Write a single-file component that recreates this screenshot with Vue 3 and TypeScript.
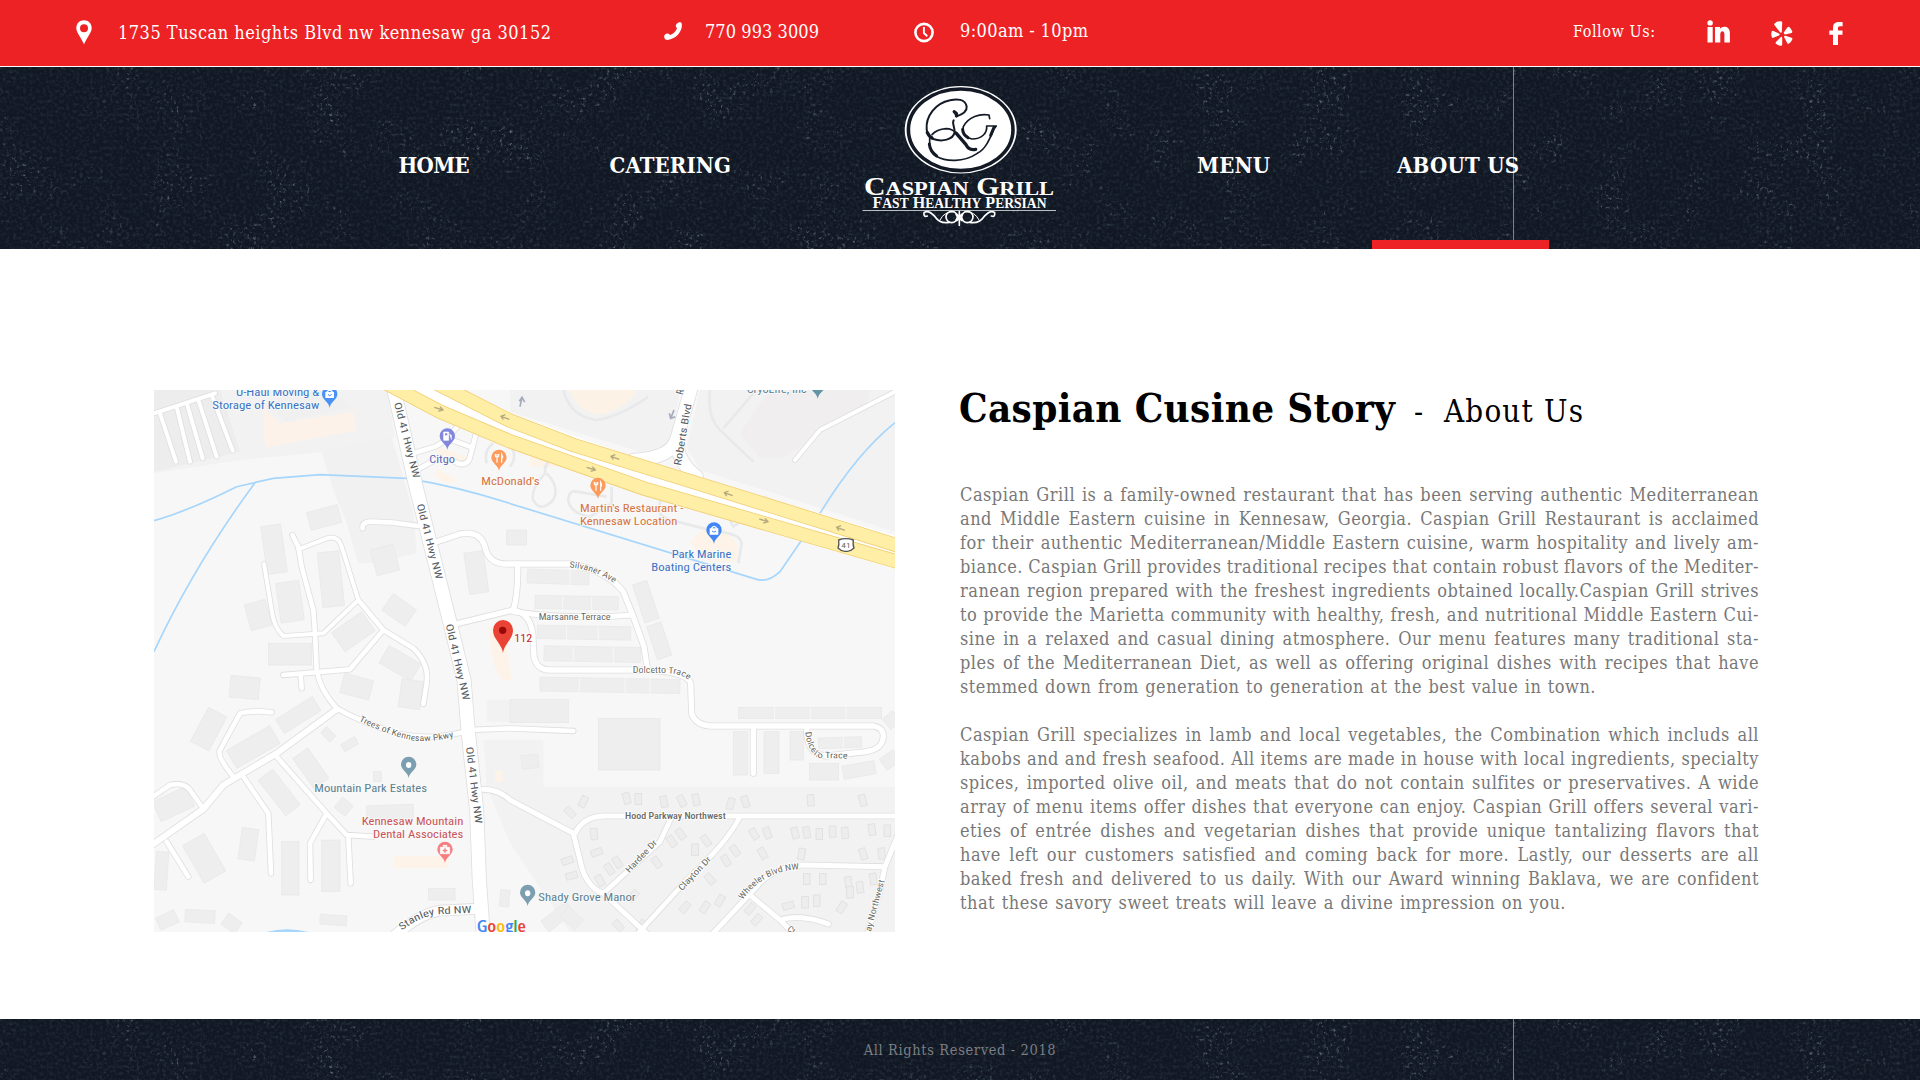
<script setup lang="ts">
type Fit = { width: number; mode?: 'letter' | 'word' }

// Spreads a line over an exact width, through its letters or its word gaps.
const vFit = {
  mounted(el: HTMLElement, binding: { value: Fit }) {
    const { width, mode = 'letter' } = binding.value
    const text = (el.textContent ?? '').trim()
    const base = parseFloat(getComputedStyle(el).letterSpacing) || 0
    const range = document.createRange()
    range.selectNodeContents(el)
    const natural = range.getBoundingClientRect().width
    if (mode === 'word') {
      const gaps = text.split(' ').length - 1
      el.style.wordSpacing = `${(width - natural) / gaps}px`
    } else {
      el.style.letterSpacing = `${base + (width - natural) / (text.length - 1)}px`
    }
  },
}

const story: { text: string; width: number }[][] = [
  [
    { text: 'Caspian Grill is a family-owned restaurant that has been serving authentic Mediterranean', width: 799 },
    { text: 'and Middle Eastern cuisine in Kennesaw, Georgia. Caspian Grill Restaurant is acclaimed', width: 799 },
    { text: 'for their authentic Mediterranean/Middle Eastern cuisine, warm hospitality and lively am-', width: 799 },
    { text: 'biance. Caspian Grill provides traditional recipes that contain robust flavors of the Mediter-', width: 799 },
    { text: 'ranean region prepared with the freshest ingredients obtained locally.Caspian Grill strives', width: 799 },
    { text: 'to provide the Marietta community with healthy, fresh, and nutritional Middle Eastern Cui-', width: 799 },
    { text: 'sine in a relaxed and casual dining atmosphere. Our menu features many traditional sta-', width: 799 },
    { text: 'ples of the Mediterranean Diet, as well as offering original dishes with recipes that have', width: 799 },
    { text: 'stemmed down from generation to generation at the best value in town.', width: 636 },
  ],
  [
    { text: 'Caspian Grill specializes in lamb and local vegetables, the Combination which includs all', width: 799 },
    { text: 'kabobs and and fresh seafood. All items are made in house with local ingredients, specialty', width: 799 },
    { text: 'spices, imported olive oil, and meats that do not contain sulfites or preservatives. A wide', width: 799 },
    { text: 'array of menu items offer dishes that everyone can enjoy. Caspian Grill offers several vari-', width: 799 },
    { text: 'eties of entrée dishes and vegetarian dishes that provide unique tantalizing flavors that', width: 799 },
    { text: 'have left our customers satisfied and coming back for more. Lastly, our desserts are all', width: 799 },
    { text: 'baked fresh and delivered to us daily. With our Award winning Baklava, we are confident', width: 799 },
    { text: 'that these savory sweet treats will leave a divine impression on you.', width: 606 },
  ],
]

const roads: { d: string; w: number }[] = [
  { d: 'M42 100L225 40M60 100L108 245M110 80L150 245M140 68L188 235M175 60L230 230M215 45L278 212', w: 12 },
  { d: 'M668 445Q665 425 695 425L760 428L835 438', w: 14 },
  { d: 'M457 465L475 500L485 560L520 690L525 760L530 870Q540 930 590 985Q650 1020 740 1050Q850 1090 985 1052', w: 14 },
  { d: 'M475 508L560 475Q595 465 605 500L655 660L550 760L430 768Q400 740 395 690L372 552', w: 12 },
  { d: 'M655 660L730 750L820 805Q868 850 860 910L850 972M730 750L630 868L430 885M482 885L485 925', w: 14 },
  { d: 'M820 220L885 200L920 180L955 135M830 270L885 240M935 180L990 200M1010 155L988 238Q975 262 945 246', w: 14 },
  { d: 'M885 487L960 462Q1020 450 1035 500Q1045 552 1100 552L1290 552Q1400 570 1450 635L1480 710L1512 800L1522 865', w: 16 },
  { d: 'M1133 552Q1135 640 1120 690L935 735M1120 690Q1170 700 1178 760L1182 830Q1190 870 1230 870L1480 870', w: 16 },
  { d: 'M1480 870Q1640 870 1652 910L1655 1000Q1665 1035 1710 1038L2200 1038Q2238 1045 2228 1080Q2220 1115 2150 1118L2060 1128Q2000 1125 2000 1045M1840 1038V1180', w: 16 },
  { d: 'M1120 695Q1300 720 1475 705', w: 15 },
  { d: 'M985 1050L1110 1045L1300 1053', w: 14 },
  { d: 'M1030 1228Q1080 1230 1110 1260L1300 1360L1320 1440Q1335 1520 1390 1540L1530 1670M1305 1360Q1330 1310 1390 1308L2280 1308', w: 15 },
  { d: 'M1595 1310L1560 1385L1390 1540M1800 1310Q1760 1390 1640 1500L1490 1665', w: 14 },
  { d: 'M1710 1670L1850 1520Q1900 1460 1990 1455L2235 1460M2280 1350L2235 1460L2220 1530Q2200 1600 2180 1670M1830 1545L1920 1620L1980 1680M1920 1620Q1980 1600 2065 1632', w: 15 },
  { d: 'M32 1398L190 1287L250 1215L410 1120L590 988', w: 18 },
  { d: 'M32 1255L90 1215Q130 1205 150 1230L190 1287M80 1385L145 1490M280 1190Q230 1130 240 1110L300 1000Q340 990 395 997', w: 14 },
  { d: 'M310 1190L385 1300L393 1480M410 1130L560 1300L620 1365L700 1370M560 1300L510 1390L512 1500M625 1370L632 1510', w: 14 },
  { d: 'M760 1670Q840 1600 900 1592L1015 1586', w: 30 },
  { d: 'M1655 20L1612 170Q1600 235 1480 240M1612 170Q1605 240 1670 290', w: 38 },
  { d: 'M2275 30L2040 150L1965 240', w: 12 },
  { d: 'M760 20L828 320L928 720L972 900L985 1060L1010 1290L1018 1500L1030 1670', w: 40 },
]

// x, y, width, height, rotation
const blocks: number[][] = [
  [372, 435, 60, 145, -8], [505, 385, 95, 55, -15], [415, 605, 70, 120, -8], [322, 665, 65, 80, -15],
  [540, 515, 65, 165, -6], [735, 660, 85, 60, 35], [585, 720, 110, 70, -35], [700, 500, 70, 80, -15],
  [980, 515, 58, 125, -8], [385, 790, 130, 65, 0], [270, 890, 88, 65, 5], [175, 990, 62, 115, 28],
  [265, 1070, 150, 62, -30], [410, 980, 130, 50, -32], [605, 890, 90, 60, 15], [725, 820, 110, 60, 30],
  [780, 900, 65, 85, 8], [45, 1240, 110, 65, -25], [155, 1370, 75, 130, -30], [300, 1345, 50, 95, 8],
  [425, 1385, 52, 160, 0], [545, 1380, 55, 155, 0], [390, 1170, 55, 135, -38], [485, 1110, 55, 110, -35],
  [45, 1415, 38, 115, 4], [680, 1275, 140, 42, -2], [865, 1525, 80, 35, 0], [540, 1605, 80, 30, 4],
  [135, 1590, 90, 38, 3], [52, 1600, 60, 40, -25], [250, 1610, 50, 40, 35], [605, 1080, 48, 25, -30],
  [1162, 570, 185, 42, 2], [1185, 648, 250, 40, 1], [1192, 738, 280, 40, 1], [1212, 800, 290, 45, 1],
  [1495, 605, 45, 120, -18], [1535, 730, 45, 105, -18], [1200, 895, 420, 42, 1], [1375, 1015, 185, 155, 0],
  [1795, 982, 430, 34, 0], [1780, 1055, 42, 130, 0], [1872, 1055, 45, 125, 0], [1950, 1055, 40, 85, 0],
  [2035, 1072, 130, 32, -2], [2008, 1150, 88, 50, 0], [2108, 1150, 98, 40, -10], [1110, 958, 175, 70, 0],
  [1145, 1125, 50, 40, -5], [1100, 450, 60, 45, 0], [590, 1260, 42, 40, 40], [700, 1175, 24, 30, 0],
  [2235, 1000, 40, 40, -40], [2225, 1120, 50, 40, -35], [1205, 1590, 95, 40, -38], [1265, 1595, 60, 40, 40],
  [1080, 1530, 28, 50, 5], [545, 1050, 40, 26, 45],
]

const houses: number[][] = [
  [1320, 1248, 26], [1450, 1238, -15], [1485, 1240, 0], [1562, 1248, -12], [1615, 1246, -25], [1658, 1242, -10],
  [1762, 1254, 15], [1806, 1248, -18], [2002, 1244, -4], [2158, 1244, -15], [1280, 1280, -45], [1352, 1345, -5],
  [1360, 1400, 70], [1272, 1425, 70], [1285, 1470, 75], [1370, 1485, -30], [1398, 1450, -32], [1422, 1430, -32],
  [1540, 1430, -35], [1585, 1367, -35], [1612, 1345, -35], [1655, 1392, 0], [1688, 1365, -35], [1748, 1425, -30],
  [1775, 1395, -35], [1832, 1345, -32], [1872, 1342, -20], [1955, 1342, -15], [1990, 1340, -10], [2028, 1345, 0],
  [2068, 1338, -2], [2105, 1342, -5], [2186, 1332, -8], [2232, 1335, 0], [1858, 1403, -30], [1975, 1405, 10],
  [2160, 1405, -20], [2215, 1404, -5], [1700, 1480, -40], [1625, 1565, 40], [1685, 1565, 35], [1730, 1545, 30],
  [1990, 1480, 0], [2038, 1480, 0], [2115, 1490, -8], [2190, 1480, -8], [1935, 1560, 75], [1985, 1550, 0],
  [2020, 1545, 0], [2095, 1565, 30], [1820, 1570, 40], [1840, 1602, 40], [1425, 1620, -40], [1470, 1530, 40],
  [2120, 1520, 0], [2150, 1505, -8], [1495, 1620, 30],
]
</script>

<template>
  <div class="page">
    <svg class="defs" width="0" height="0" aria-hidden="true">
      <filter id="grain" x="0" y="0" width="100%" height="100%" color-interpolation-filters="sRGB">
        <feTurbulence type="fractalNoise" baseFrequency="0.3" numOctaves="3" seed="4" result="fine" />
        <feColorMatrix in="fine" values="0 0 0 0 .5  0 0 0 0 .56  0 0 0 0 .58  2.6 0 0 0 -1.55" result="specks" />
        <feTurbulence type="fractalNoise" baseFrequency="0.02" numOctaves="3" seed="9" result="cloud" />
        <feColorMatrix in="cloud" values="0 0 0 0 1  0 0 0 0 1  0 0 0 0 1  0 3 0 0 -1.25" result="mask" />
        <feComposite in="specks" in2="mask" operator="in" result="dust" />
        <feColorMatrix in="fine" values="0 0 0 0 .25  0 0 0 0 .33  0 0 0 0 .38  0 0 .7 0 -.3" result="haze" />
        <feMerge><feMergeNode in="haze" /><feMergeNode in="dust" /></feMerge>
      </filter>
    </svg>

    <div class="topbar">
      <div class="item address">
        <svg class="pin" width="16" height="25" viewBox="0 0 16 25">
          <path fill="#fff" fill-rule="evenodd" d="M8 .2C3.500.2.300 3.500.300 8c0 4.500 4 8 7.700 16.300C11.700 16 15.700 12.500 15.700 8 15.700 3.500 12.500.200 8 .200ZM8 4.200a4 4 0 1 1 0 8 4 4 0 0 1 0-8Z" />
        </svg>
        <span v-fit="{ width: 433 }" class="t18">1735 Tuscan heights Blvd nw kennesaw ga 30152</span>
      </div>
      <div class="item phone">
        <svg width="18" height="18" viewBox="0 0 18 18">
          <path d="M13.200 1.200Q14.800-.2 16.800.3Q18 .8 17.900 3.600C17.700 11 10.500 17.800 3 17.900Q1.200 17.900.5 16.300Q-.2 14 .8 12.800Q2.700 11 4.200 11.600L6.200 13C9 12.200 12 9.500 13 6.300L11.800 4.300Q11.600 2.700 13.200 1.200Z" fill="#fff" />
        </svg>
        <span v-fit="{ width: 114 }" class="t18">770 993 3009</span>
      </div>
      <div class="item hours">
        <svg width="20" height="21" viewBox="0 0 20 21">
          <circle cx="10" cy="10.500" r="8.600" fill="none" stroke="#fff" stroke-width="2.600" />
          <path d="M9.900 5V11L13.300 14.200" fill="none" stroke="#fff" stroke-width="1.900" />
        </svg>
        <span v-fit="{ width: 128 }" class="t18">9:00am - 10pm</span>
      </div>
      <div class="item follow">
        <span v-fit="{ width: 82 }" class="t16">Follow Us:</span>
        <svg class="in" width="23" height="23" viewBox="0 0 23 23">
          <g fill="#fff">
            <circle cx="3.100" cy="2.900" r="2.700" />
            <path d="M.5 6.900H5.700V22.500H.500ZM8 6.900H13V8.600C15.500 5.500 22.900 5.500 22.900 13V22.500H17.400V14.200C17.400 10.300 13.300 10.300 13.300 14.200V22.500H8Z" />
          </g>
        </svg>
        <svg class="yelp" width="22" height="25" viewBox="0 0 22 25">
          <path fill="#fff" d="M3.500 2.500Q6-.3 10.200.3Q11.300.5 11.200 1.800L10.800 10.800Q10.500 12.500 9 11.300L3.400 4Q3 3.200 3.500 2.500ZM.8 10.300Q1.300 9.400 2.500 9.900L8 12.500Q9.300 13.400 8 14.400L2.300 16.800Q1.200 17.100.9 16.200Q-.3 13 .8 10.300ZM9.600 16.300Q10.900 15.200 11.200 16.800V23.600Q11 25 9.800 24.800Q7 24.500 5 22.800Q4.300 22 4.900 21.100ZM13.200 16.200Q12.600 14.600 14.300 14.800L20.600 16.700Q21.800 17.200 21.300 18.400Q20 21.300 18 22.500Q17 23.100 16.300 22.200ZM12.800 11.400L16.500 6.200Q17.400 5.300 18.500 6.200Q20.700 8.300 21.300 10.400Q21.500 11.500 20.500 11.900L14.300 13.400Q12.500 13.300 12.800 11.400Z" />
        </svg>
        <svg class="fb" width="14" height="23" viewBox="0 0 14 23">
          <path fill="#fff" d="M4 23V12.700H.300V8.500H4V5.600C4 1.500 6.500 0 10 0H13.600V4.300H11C9.500 4.300 9 5 9 6.200V8.500H13.500V12.700H9V23Z" />
        </svg>
      </div>
    </div>

    <header class="nav dark">
      <svg class="grain" width="1920" height="182"><rect width="100%" height="100%" filter="url(#grain)" /></svg>
      <i class="seam"></i>
      <nav class="left">
        <a class="home"><span v-fit="{ width: 71 }">HOME</span></a>
        <a class="catering"><span v-fit="{ width: 121.500 }">CATERING</span></a>
      </nav>
      <svg class="logo" width="200" height="150" viewBox="860 80 200 150">
        <ellipse cx="960.700" cy="129.800" rx="56" ry="43.700" fill="#fff" />
        <ellipse cx="960.700" cy="129.800" rx="52.300" ry="40.800" fill="none" stroke="#131a26" stroke-width="3.600" />
        <g transform="translate(840 70) scale(.33333)" fill="none" stroke="#131a26" stroke-linecap="round" stroke-linejoin="round">
          <path stroke-width="6" d="M342 123Q356 130 350 139Q382 128 380 110C376 86 350 86 330 91C285 100 257 140 260 178Q262 198 280 207C305 216 340 210 344 186C344 170 335 158 341 151" />
          <path stroke-width="10" d="M262 188Q266 198 276 204M349 190L378 224Q386 242 407 238" />
          <path stroke-width="5" d="M340 125L350 138M276 194Q290 178 318 176Q338 176 352 192" />
          <path stroke-width="5" d="M449 146L447 135C420 130 385 140 370 170C365 188 376 203 396 207C425 207 442 190 440 168H469L461 178C448 210 436 238 412 250C370 278 318 276 288 258Q266 244 269 204" />
          <path stroke-width="9" d="M350 132L349 138M462 172L452 196M268 222Q270 244 290 258M368 178Q368 194 384 203" />
        </g>
        <g fill="#fff" font-family="'Liberation Serif', serif">
          <text x="864" y="194.800" font-size="26" textLength="190" lengthAdjust="spacingAndGlyphs">C<tspan font-size="19.500">ASPIAN</tspan> G<tspan font-size="19.500">RILL</tspan></text>
          <text x="872.500" y="207.600" font-size="16.500" textLength="174" lengthAdjust="spacingAndGlyphs">F<tspan font-size="14">AST</tspan> H<tspan font-size="14">EALTHY</tspan> P<tspan font-size="14">ERSIAN</tspan></text>
        </g>
        <path d="M862.500 210.500H1056" stroke="#b9bdc1" stroke-width="1" />
        <g transform="translate(840 70) scale(.33333)" fill="none" stroke="#fff" stroke-width="5" stroke-linecap="round">
          <circle cx="335" cy="441" r="17" />
          <circle cx="382" cy="441" r="17" />
          <path d="M342 425Q312 424 300 450M375 425Q405 424 417 450" stroke-width="3" />
          <path d="M328 457Q300 462 285 440Q265 418 252 428Q250 442 262 438M389 457Q417 462 432 440Q452 418 464 428Q466 442 454 438M358 425V466" />
          <path d="M350 434L366 450M366 434L350 450" stroke-width="8" />
        </g>
      </svg>
      <nav class="right">
        <a class="menu"><span v-fit="{ width: 73 }">MENU</span></a>
        <a class="about active"><span v-fit="{ width: 122 }">ABOUT US</span></a>
      </nav>
    </header>

    <main class="content">
      <svg class="map" width="741" height="542" viewBox="42 30 2223 1626" preserveAspectRatio="none">
        <rect x="42" y="30" width="2223" height="1626" fill="#f7f7f7" />
        <g fill="#f2f2f2">
          <path d="M42 30H740L765 170L560 215L300 240L42 280Z" />
          <path d="M1250 30H1620L1590 200L1500 215L1110 95V30Z" />
          <path d="M1680 30H2265V455L1680 270L1640 200Z" />
          <path d="M1040 960H1285V1025H1040ZM1030 1080H1210V1220H2265V1656H1290L1110 1390L1040 1220Z" />
        </g>
        <path d="M545 215L755 170L820 400L830 520L700 550H655L620 430L580 330Z" fill="#f2f1f2" />
        <path d="M42 30H240L300 215L42 275Z" fill="#eeedee" />
        <path d="M370 85L420 130L640 95L650 150L375 203Z" fill="#fdf2e9" />
        <path d="M430 30H560L640 80L440 125L405 90Z" fill="#f0f0f1" />
        <path d="M1290 30H1490Q1460 90 1370 105Q1300 80 1290 30Z" fill="#fdf2e6" />
        <path d="M1890 30H2190L2180 70L1930 235H1860L1800 160Z" fill="#f0eeee" />
        <path d="M890 200L980 230L970 255L900 240ZM890 265L950 300L930 312L885 290ZM1170 230H1250V260H1170ZM1650 490Q1680 440 1740 440Q1810 480 1790 545H1710ZM760 1428H925V1465H760ZM1045 740H1090L1115 900H1085L1060 850ZM1065 1172H1088V1205H1065Z" fill="#fdf3e8" />
        <g fill="none" stroke="#e8e9ea" stroke-width="8">
          <path d="M1270 30Q1290 110 1370 120Q1440 110 1525 50M1710 30Q1700 110 1740 150L1840 245M1840 40L1750 145M1215 270L1225 240M1040 250Q1030 210 1060 190M1100 190Q1140 220 1110 260M1220 280Q1260 320 1240 360Q1200 400 1180 360Q1170 330 1215 280V255" />
          <path d="M1415 320V370L1350 410Q1290 400 1285 360Q1285 330 1310 335L1400 350M1560 350V370Q1540 410 1610 425L1730 455Q1800 460 1805 490L1795 550M1765 410L1780 440L1810 420" />
        </g>
        <g fill="#eeeeef" stroke="#e7e7e8" stroke-width="2">
          <rect v-for="(b, i) in blocks" :key="i" :x="b[0]" :y="b[1]" :width="b[2]" :height="b[3]" :transform="`rotate(${b[4]} ${b[0] + b[2] / 2} ${b[1] + b[3] / 2})`" />
        </g>
        <g fill="#ededed" stroke="#dcdcdc" stroke-width="2">
          <rect v-for="(h, i) in houses" :key="i" :x="h[0]" :y="h[1]" width="20" height="34" :transform="`rotate(${h[2]} ${h[0] + 10} ${h[1] + 17})`" />
        </g>
        <g fill="none" stroke="#f7f7f7" stroke-width="3">
          <path d="M1290 570V620M1268 650V690M1355 650V690M1280 740V780M1375 740V780M1300 800V850M1420 800V850M1318 895V940M1455 895V940M1530 895V940M1904 980V1018M2011 980V1018M2118 980V1018M2110 1070V1105" />
        </g>
        <g fill="none" stroke="#a6d6fc" stroke-width="5">
          <path d="M42 422Q140 395 290 320L400 295L540 284L800 295Q960 320 1140 380L1850 598Q1885 608 1920 575L2040 400Q2150 220 2265 128" />
          <path d="M345 308Q160 560 42 815" />
          <path d="M375 1660Q440 1640 510 1660Z" fill="#a6d6fc" />
        </g>
        <g fill="none" stroke="#dfdfdf" stroke-linecap="round" stroke-linejoin="round">
          <path v-for="(r, i) in roads" :key="i" :d="r.d" :stroke-width="r.w + 5" />
        </g>
        <g fill="none" stroke="#fff" stroke-linecap="round" stroke-linejoin="round">
          <path v-for="(r, i) in roads" :key="i" :d="r.d" :stroke-width="r.w" />
        </g>
        <g fill="none">
          <path d="M780 -10L1110 150L1510 291L2275 520" stroke="#fff" stroke-width="96" />
          <g stroke="#f2cf74" stroke-width="43">
            <path d="M830 -20L1110 122L1300 195L1640 300L2275 497" />
            <path d="M720 0L900 95L1110 184L1510 325L2275 546" />
          </g>
          <g stroke="#feeea6" stroke-width="38">
            <path d="M830 -20L1110 122L1300 195L1640 300L2275 497" />
            <path d="M720 0L900 95L1110 184L1510 325L2275 546" />
          </g>
          <g stroke="#b5a97e" stroke-width="4">
            <path id="arrow-l" d="M1438 238L1413 229M1426 224L1413 229L1420 239" />
            <use href="#arrow-l" x="340" y="109" />
            <use href="#arrow-l" x="677" y="213" />
            <use href="#arrow-l" x="-330" y="-120" />
            <path id="arrow-r" d="M1340 262L1366 270M1352 274L1366 270L1357 260" />
            <use href="#arrow-r" x="518" y="155" />
            <use href="#arrow-r" x="-457" y="-180" />
          </g>
          <path d="M1602 90L1592 115M1588 100L1592 115L1606 110M1140 80L1146 52M1138 64L1146 52L1154 66" stroke="#a5acbd" stroke-width="5" />
        </g>
        <path d="M2096 480Q2118 472 2140 480Q2138 496 2142 504Q2130 516 2118 514Q2106 516 2094 504Q2098 494 2096 480Z" fill="#fff" stroke="#555" stroke-width="4" />

        <defs>
          <path id="trees" d="M656 1022Q740 1065 820 1082Q880 1088 952 1068" />
          <path id="silvaner" d="M1288 562Q1370 570 1432 616" />
          <path id="dolcetto" d="M1478 880L1590 880Q1630 882 1656 910" />
          <path id="dolcetto2" d="M1996 1056Q2000 1110 2035 1134L2140 1136" />
          <path id="stanley" d="M785 1652Q850 1602 910 1602L1000 1598" />
          <path id="wheeler" d="M1808 1560Q1870 1470 1985 1468" />
        </defs>
        <g class="street" font-size="30">
          <text transform="translate(762 70) rotate(75.500)" textLength="234" lengthAdjust="spacingAndGlyphs">Old 41 Hwy NW</text>
          <text transform="translate(830 374) rotate(75.500)" textLength="233" lengthAdjust="spacingAndGlyphs">Old 41 Hwy NW</text>
          <text transform="translate(917 734) rotate(77)" textLength="234" lengthAdjust="spacingAndGlyphs">Old 41 Hwy NW</text>
          <text transform="translate(978 1102) rotate(83)" textLength="231" lengthAdjust="spacingAndGlyphs">Old 41 Hwy NW</text>
          <text transform="translate(1622 258) rotate(-80)" textLength="188" lengthAdjust="spacingAndGlyphs">Roberts Blvd</text>
          <text transform="translate(1628 46) rotate(-76)">R</text>
          <text><textPath href="#stanley" textLength="222" lengthAdjust="spacingAndGlyphs">Stanley Rd NW</textPath></text>
        </g>
        <g class="street small" font-size="26">
          <text><textPath href="#trees" textLength="298" lengthAdjust="spacingAndGlyphs">Trees of Kennesaw Pkwy</textPath></text>
          <text><textPath href="#silvaner" textLength="144" lengthAdjust="spacingAndGlyphs">Silvaner Ave</textPath></text>
          <text><textPath href="#dolcetto" textLength="172" lengthAdjust="spacingAndGlyphs">Dolcetto Trace</textPath></text>
          <text><textPath href="#dolcetto2" textLength="178" lengthAdjust="spacingAndGlyphs">Dolcetto Trace</textPath></text>
          <text x="1196" y="719" textLength="216" lengthAdjust="spacingAndGlyphs">Marsanne Terrace</text>
          <text x="1455" y="1317" textLength="302" lengthAdjust="spacingAndGlyphs" font-weight="500">Hood Parkway Northwest</text>
          <text transform="translate(1468 1480) rotate(-47)" textLength="124" lengthAdjust="spacingAndGlyphs">Hardee Dr</text>
          <text transform="translate(1626 1534) rotate(-47)" textLength="130" lengthAdjust="spacingAndGlyphs">Clayton Dr</text>
          <text><textPath href="#wheeler" textLength="200" lengthAdjust="spacingAndGlyphs">Wheeler Blvd NW</textPath></text>
          <text transform="translate(2192 1656) rotate(-75)" textLength="160" lengthAdjust="spacingAndGlyphs">ay Northwest</text>
          <text transform="translate(1940 1650) rotate(38)">Ct</text>
          <text x="2104" y="504" font-size="24" textLength="28" lengthAdjust="spacingAndGlyphs">41</text>
        </g>
        <g class="poi" font-size="32">
          <g fill="#3a73c4">
            <text x="288" y="48" textLength="250" lengthAdjust="spacingAndGlyphs">U-Haul Moving &amp;</text>
            <text x="217" y="86" textLength="321" lengthAdjust="spacingAndGlyphs">Storage of Kennesaw</text>
            <text x="1595" y="533" textLength="179" lengthAdjust="spacingAndGlyphs">Park Marine</text>
            <text x="1534" y="572" textLength="240" lengthAdjust="spacingAndGlyphs">Boating Centers</text>
          </g>
          <text x="868" y="250" textLength="77" lengthAdjust="spacingAndGlyphs" fill="#5c67b3">Citgo</text>
          <g fill="#d6743f">
            <text x="1024" y="314" textLength="175" lengthAdjust="spacingAndGlyphs">McDonald's</text>
            <text x="1320" y="397" textLength="310" lengthAdjust="spacingAndGlyphs">Martin's Restaurant -</text>
            <text x="1320" y="436" textLength="292" lengthAdjust="spacingAndGlyphs">Kennesaw Location</text>
          </g>
          <g fill="#5c8090">
            <text x="1820" y="39" textLength="180" lengthAdjust="spacingAndGlyphs">CryoLife, Inc</text>
            <text x="523" y="1235" textLength="338" lengthAdjust="spacingAndGlyphs">Mountain Park Estates</text>
            <text x="1195" y="1562" textLength="292" lengthAdjust="spacingAndGlyphs">Shady Grove Manor</text>
          </g>
          <g fill="#c95459">
            <text x="665" y="1335" textLength="305" lengthAdjust="spacingAndGlyphs">Kennesaw Mountain</text>
            <text x="699" y="1374" textLength="271" lengthAdjust="spacingAndGlyphs">Dental Associates</text>
          </g>
          <text x="1123" y="786" textLength="54" lengthAdjust="spacingAndGlyphs" fill="#c5221f">112</text>
        </g>
        <defs>
          <path id="marker" d="M0 40C-3 22-23 16-23-1A23 23 0 0 1 23-1C23 16 3 22 0 40Z" />
        </defs>
        <use href="#marker" x="569" y="43" fill="#4a93f5" />
        <use href="#marker" x="1722" y="451" fill="#4285f4" />
        <g fill="none" stroke="#fff" stroke-width="4">
          <path d="M560 38Q569 22 578 38M1714 446Q1722 432 1731 446" />
        </g>
        <path d="M556 36H582V54H556ZM1709 445H1735V464H1709Z" fill="#fff" />
        <path d="M564 43Q569 52 575 43M1716 453Q1722 460 1728 453" fill="none" stroke="#4285f4" stroke-width="3" />
        <use href="#marker" x="922" y="169" fill="#8087dc" />
        <path d="M911 156H926V181H911ZM928 162L934 166V179" fill="#fff" stroke="#fff" stroke-width="2" />
        <path d="M915 160H922V166H915Z" fill="#8087dc" />
        <g id="food">
          <use href="#marker" x="1077" y="233" fill="#fd9b5c" />
          <path d="M1066 222V230M1071 222V248M1076 222V230M1066 230H1076M1085 248V222Q1090 230 1086 236" fill="none" stroke="#fff" stroke-width="3.500" />
        </g>
        <use href="#food" x="297" y="84" />
        <use href="#marker" x="2033" y="16" fill="#6195a6" />
        <g fill="#7b9fb0">
          <use href="#marker" x="806" y="1154" />
          <use href="#marker" x="1163" y="1538" />
        </g>
        <ellipse cx="806" cy="1155" rx="8" ry="9" fill="#fff" />
        <ellipse cx="1163" cy="1540" rx="8" ry="9" fill="#fff" />
        <use href="#marker" x="915" y="1409" fill="#f57f80" />
        <path d="M901 1402H929V1421H901ZM909 1400V1396H921V1400" fill="#fff" stroke="#fff" stroke-width="2" />
        <path d="M915 1405V1418M908 1411.500H922" stroke="#f57f80" stroke-width="4" />
        <path d="M1089 819C1085 790 1059 778 1059 750A30 30 0 0 1 1119 750C1119 778 1093 790 1089 819Z" fill="#ea4335" />
        <circle cx="1088" cy="751" r="11" fill="#960a0a" />
        <text class="google" x="1010" y="1657" font-size="46" textLength="148" lengthAdjust="spacingAndGlyphs"><tspan fill="#4285f4">G</tspan><tspan fill="#ea4335">o</tspan><tspan fill="#fbbc05">o</tspan><tspan fill="#4285f4">g</tspan><tspan fill="#34a853">l</tspan><tspan fill="#ea4335">e</tspan></text>
      </svg>

      <article class="story">
        <h1>
          <span v-fit="{ width: 436 }" class="title">Caspian Cusine Story</span>
          <span class="dash">-</span>
          <span v-fit="{ width: 139 }" class="sub">About Us</span>
        </h1>
        <p v-for="(para, i) in story" :key="i">
          <span v-for="line in para" :key="line.text" v-fit="{ width: line.width, mode: 'word' }" class="line">{{ line.text }}</span>
        </p>
      </article>
    </main>

    <footer class="footer dark">
      <svg class="grain" width="1920" height="61"><rect width="100%" height="100%" filter="url(#grain)" /></svg>
      <i class="seam"></i>
      <span v-fit="{ width: 192 }">All Rights Reserved - 2018</span>
    </footer>
  </div>
</template>

<style>
body {
  margin: 0;
  background: #fff;
}
</style>

<style scoped>
.page {
  width: 1920px;
  height: 1080px;
  overflow: hidden;
  display: flex;
  flex-direction: column;
  font-family: 'Roboto Slab', 'DejaVu Serif Condensed', 'DejaVu Serif', serif;
  font-stretch: condensed;
  font-variant-ligatures: none;
}
.defs {
  position: absolute;
}
.topbar {
  height: 66px;
  flex: none;
  display: flex;
  background: #ed2224;
  border-bottom: 1px solid #fff;
  color: #fff;
}
.item {
  display: flex;
  align-items: flex-start;
  white-space: nowrap;
}
.item svg {
  flex: none;
  margin-top: 22px;
}
.item .pin {
  margin-top: 20px;
}
.t18 {
  font-size: 18px;
  line-height: 24px;
}
.t16 {
  font-size: 16px;
  line-height: 24px;
}
.address {
  width: 588px;
  padding-left: 76px;
}
.address span {
  margin: 21px 0 0 26px;
}
.phone {
  width: 250px;
}
.phone span {
  margin: 20px 0 0 23px;
}
.hours {
  flex: 1;
}
.hours span {
  margin: 19px 0 0 26px;
}
.follow {
  width: 347px;
}
.follow span {
  margin-top: 20px;
  width: 134px;
}
.item .in {
  margin-top: 20px;
  margin-right: 41px;
}
.item .yelp {
  margin-top: 21px;
  margin-right: 36px;
}
.dark {
  position: relative;
  background: #111824;
}
.grain {
  position: absolute;
  left: 0;
  top: 0;
}
.seam {
  position: absolute;
  left: 1513px;
  top: 0;
  bottom: 0;
  width: 1px;
  background: #7c828b;
}
.nav {
  height: 182px;
  flex: none;
  display: flex;
  color: #fff;
  font-size: 22px;
  font-weight: 700;
}
.nav nav {
  display: flex;
  position: relative;
}
.nav a {
  display: block;
  box-sizing: border-box;
  line-height: 28px;
  padding-top: 84px;
  white-space: nowrap;
}
.left {
  width: 860px;
}
.home {
  width: 211px;
  margin-left: 398.500px;
}
.logo {
  position: relative;
  flex: none;
  margin-top: 13px;
}
.right {
  flex: 1;
}
.menu {
  width: 175px;
  margin-left: 137px;
}
.about {
  width: 177px;
  padding-left: 25px;
}
.active {
  border-bottom: 9px solid #ed2224;
}
.content {
  flex: 1;
  display: flex;
}
.map {
  flex: none;
  margin: 141px 0 0 154px;
}
.map text {
  font-family: Roboto, sans-serif;
}
.street {
  fill: #565b60;
  stroke: #fff;
  stroke-width: 5px;
  paint-order: stroke;
}
.small {
  fill: #6b6a64;
}
.poi {
  stroke: #fafafa;
  stroke-width: 4px;
  paint-order: stroke;
}
.map .google {
  font-family: 'Open Sans', sans-serif;
  font-weight: 600;
}
.story {
  margin: 141px 0 0 65px;
}
h1 {
  display: flex;
  align-items: baseline;
  margin: -12px 0 45px -1px;
  height: 60px;
  line-height: 60px;
  font-weight: 400;
  color: #000;
  white-space: nowrap;
}
.title {
  flex: none;
  width: 455px;
  font-size: 40px;
  font-weight: 700;
}
.dash {
  font-size: 30px;
  width: 30px;
}
.sub {
  font-size: 31px;
}
p {
  display: flex;
  flex-direction: column;
  align-items: flex-start;
  margin: 0 0 24px;
  font-size: 18px;
  letter-spacing: 0.5px;
  line-height: 24px;
  color: #787878;
}
.line {
  white-space: nowrap;
}
.footer {
  height: 61px;
  flex: none;
  display: flex;
  justify-content: center;
  color: #7b7e83;
  font-size: 14.500px;
  line-height: 20px;
}
.footer span {
  position: relative;
  margin-top: 21px;
  white-space: nowrap;
}
</style>
